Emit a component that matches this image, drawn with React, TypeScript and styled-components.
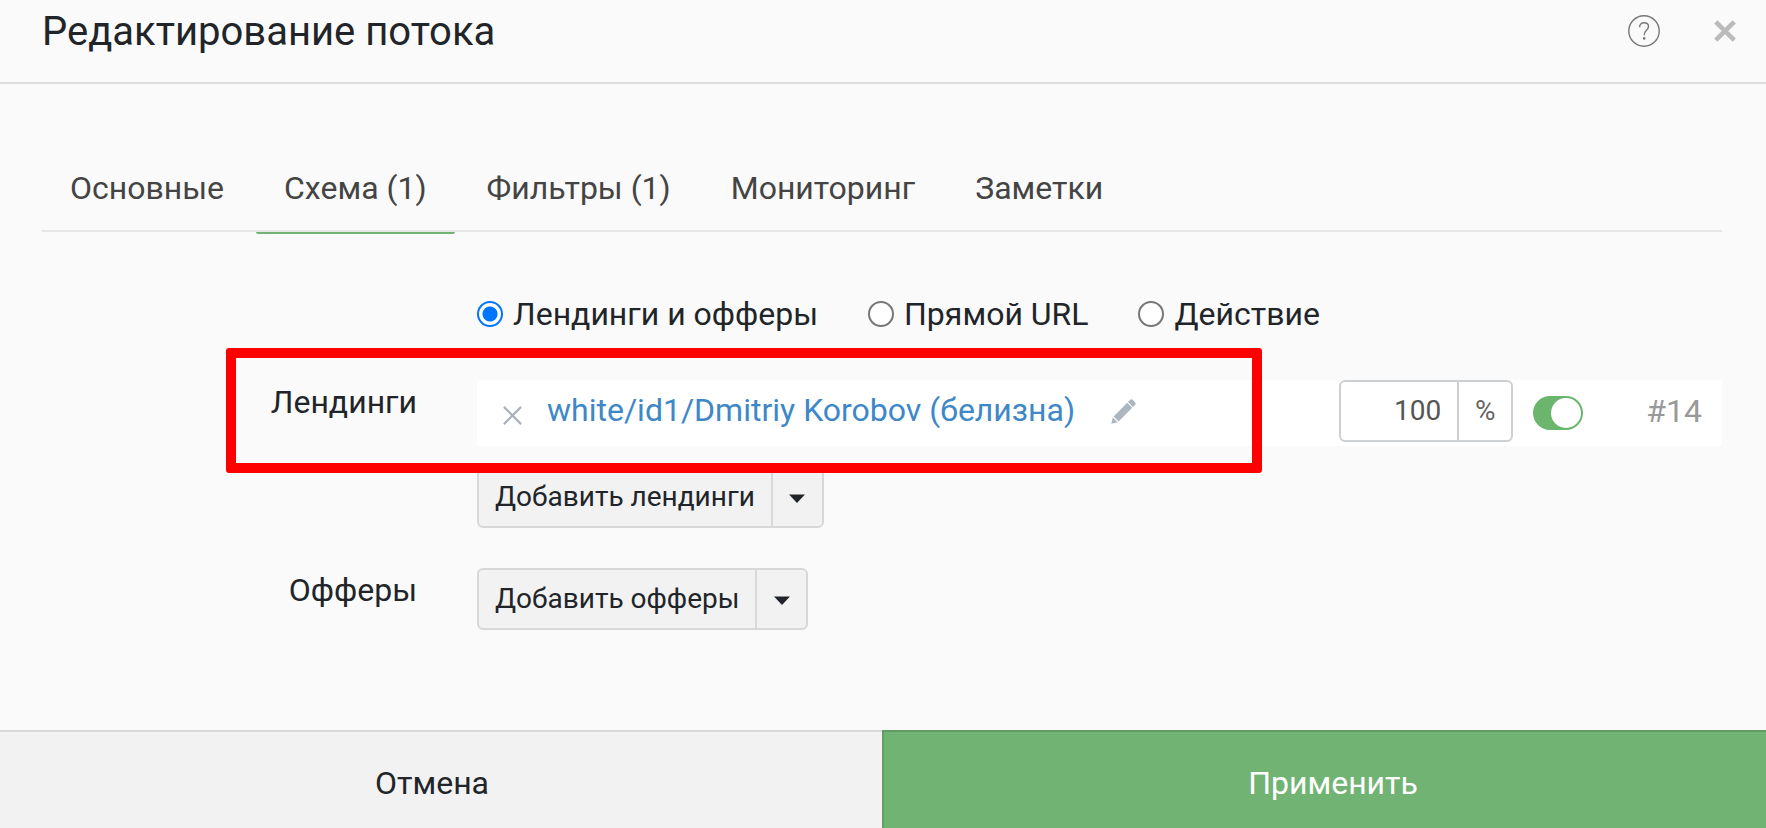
import React, { useState } from "react";
import styled, { createGlobalStyle } from "styled-components";

const GlobalStyle = createGlobalStyle`
  *, *::before, *::after { box-sizing: border-box; }
  body {
    margin: 0;
    background: #fafafa;
    color: #212529;
    font-family: Roboto, "Liberation Sans", sans-serif;
    font-size: 32px;
    line-height: 38px;
  }
  button, input { font: inherit; color: inherit; }
`;

const Dialog = styled.form`
  display: flex;
  flex-direction: column;
  min-height: 100vh;
`;

const Header = styled.header`
  display: flex;
  align-items: flex-start;
  justify-content: space-between;
  padding: 8px 30px 26px 42px;
  border-bottom: 2px solid #dedede;
`;

const Title = styled.h1`
  margin: 0;
  font-size: 40px;
  line-height: 48px;
  font-weight: 400;
`;

const HeaderActions = styled.div`
  display: flex;
  align-items: center;
  gap: 54px;
  height: 45px;
`;

const IconButton = styled.button`
  display: flex;
  flex: none;
  padding: 0;
  border: 0;
  background: none;
  cursor: pointer;
`;

const RemoveButton = styled(IconButton)`
  padding-top: 8px;
`;

const Content = styled.main`
  flex: 1;
  padding: 60px 44px 60px 42px;
`;

const Tabs = styled.div`
  display: flex;
  gap: 4px;
  border-bottom: 2px solid #e6e6e6;
`;

const Tab = styled.button<{ $active: boolean }>`
  margin-bottom: -4px;
  padding: 25px 28px;
  border: 0;
  border-bottom: 2px solid ${(p) => (p.$active ? "#70b373" : "transparent")};
  border-radius: 2px;
  background: none;
  color: #444;
  white-space: nowrap;
  cursor: pointer;
`;

const FormGrid = styled.div`
  display: flex;
  flex-direction: column;
  gap: 40px;
  padding-top: 63px;
`;

const Row = styled.div`
  position: relative;
  display: grid;
  grid-template-columns: minmax(160px, 375px) minmax(0, 1fr);
  column-gap: 60px;
`;

const RadioRow = styled(Row)`
  margin-bottom: 7px;
`;

const RowLabel = styled.div`
  padding-top: 3px;
  text-align: right;
`;

const RowBody = styled.div`
  display: flex;
  flex-direction: column;
  align-items: flex-start;
  gap: 20px;
`;

const RadioGroup = styled.div`
  grid-column: 2;
  display: flex;
  flex-wrap: wrap;
  gap: 50px;
`;

const RadioLabel = styled.label`
  display: flex;
  align-items: center;
  gap: 10px;
  white-space: nowrap;
`;

const Radio = styled.input`
  appearance: none;
  width: 26px;
  height: 26px;
  margin: 0;
  border: 2px solid #767676;
  border-radius: 50%;
  background: #fff;
  &:checked {
    border-color: #0075ff;
    background: radial-gradient(circle, #0075ff 7px, #fff 8px);
  }
`;

const Item = styled.div`
  display: flex;
  align-items: center;
  align-self: stretch;
  padding: 0 20px 4px 26px;
  background: #fff;
`;

const ItemLink = styled.a`
  margin: 0 36px 2px 25px;
  color: #3e88c7;
  text-decoration: none;
  white-space: nowrap;
`;

const Share = styled.div`
  display: flex;
  height: 62px;
  margin: 0 20px 0 auto;
  border: 2px solid #cdd0d2;
  border-radius: 6px;
  font-size: 28px;
`;

const ShareInput = styled.input`
  width: 116px;
  padding: 0 16px;
  border: 0;
  background: none;
  color: #555;
  text-align: right;
`;

const ShareUnit = styled.span`
  display: flex;
  align-items: center;
  justify-content: center;
  width: 54px;
  border-left: 2px solid #cdd0d2;
  color: #666;
`;

const Switch = styled.input`
  appearance: none;
  flex: none;
  width: 50px;
  height: 34px;
  margin: 4px 0 0;
  padding: 2px;
  border-radius: 17px;
  background: #ccc;
  cursor: pointer;
  &::before {
    content: "";
    display: block;
    width: 30px;
    height: 30px;
    border-radius: 50%;
    background: #fff;
  }
  &:checked { background: #6bb56d; }
  &:checked::before { margin-left: 16px; }
`;

const ItemId = styled.span`
  margin-left: 63px;
  color: #999;
`;

const SplitButton = styled.div`
  display: flex;
  height: 62px;
  border: 2px solid #d8d8d8;
  border-radius: 6px;
  background: #f2f2f2;
  font-size: 28px;
`;

const AddButton = styled.button`
  padding: 0 16px;
  border: 0;
  background: none;
  white-space: nowrap;
  cursor: pointer;
`;

const CaretButton = styled.button`
  display: flex;
  align-items: center;
  justify-content: center;
  width: 51px;
  padding: 2px 0 0;
  border: 0;
  border-left: 2px solid #d8d8d8;
  background: none;
  cursor: pointer;
`;

const Highlight = styled.div`
  position: absolute;
  top: -32px;
  left: 184px;
  right: 460px;
  height: 125px;
  border: 10px solid #f00;
  border-radius: 3px;
  pointer-events: none;
`;

const Footer = styled.footer`
  display: grid;
  grid-template-columns: calc(50% - 1px) 1fr;
`;

const FooterButton = styled.button<{ $primary?: boolean }>`
  padding: ${(p) => (p.$primary ? "32px 0 26px 16px" : "32px 18px 26px 0")};
  border: 0 solid ${(p) => (p.$primary ? "#629d65" : "#d8d8d8")};
  border-top-width: 2px;
  border-left-width: ${(p) => (p.$primary ? "2px" : "0")};
  background: ${(p) => (p.$primary ? "#70b373" : "#f2f2f2")};
  color: ${(p) => (p.$primary ? "#fff" : "#212529")};
  cursor: pointer;
`;

const HelpIcon = () => (
  <svg width="32" height="32" viewBox="0 0 32 32" fill="none" stroke="#777" strokeWidth="1.4" aria-hidden="true">
    <circle cx="16" cy="16" r="15.2" />
    <path d="M11.6 12.2C11.4 9.4 13.4 7.8 16.1 7.8C18.7 7.8 20.5 9.4 20.5 11.6C20.5 13.6 19.4 14.5 18 15.8C16.6 17.1 16.2 17.9 16.2 20.2" />
    <circle cx="16.2" cy="23.4" r="1.3" fill="#777" stroke="none" />
  </svg>
);

const CloseIcon = () => (
  <svg width="22" height="22" viewBox="0 0 22 22" stroke="#bbb" strokeWidth="4.6" aria-hidden="true">
    <path d="M1.8 1.8L20.2 20.2M20.2 1.8L1.8 20.2" />
  </svg>
);

const RemoveIcon = () => (
  <svg width="19" height="19" viewBox="0 0 19 19" stroke="#adb2b9" strokeWidth="2.2" aria-hidden="true">
    <path d="M0.9 0.9L18.1 18.1M18.1 0.9L0.9 18.1" />
  </svg>
);

const PencilIcon = () => (
  <svg width="25" height="25" viewBox="0 0 25 25" fill="#adb5bd" aria-hidden="true">
    <path d="M1.7 18.4L6.6 23.3L0.3 24.8Z" />
    <path d="M2.6 17.4L16.2 3.8L21.2 8.8L7.6 22.4Z" />
    <path d="M17 3L19 1Q20.4 -0.3 21.8 1L24 3.2Q25.3 4.6 24 6L22 8Z" />
  </svg>
);

const CaretIcon = () => (
  <svg width="16" height="9" viewBox="0 0 16 9" fill="#212529" aria-hidden="true">
    <path d="M0 0.5H16L8 9Z" />
  </svg>
);

const tabs = ["Основные", "Схема (1)", "Фильтры (1)", "Мониторинг", "Заметки"];
const schemas = ["Лендинги и офферы", "Прямой URL", "Действие"];

const AddControl = ({ text }: { text: string }) => (
  <SplitButton>
    <AddButton type="button">{text}</AddButton>
    <CaretButton type="button" aria-label={`${text}: ещё`}>
      <CaretIcon />
    </CaretButton>
  </SplitButton>
);

export default function App() {
  const [tab, setTab] = useState(1);
  const [schema, setSchema] = useState(0);

  return (
    <>
      <GlobalStyle />
      <Dialog onSubmit={(e) => e.preventDefault()}>
        <Header>
          <Title>Редактирование потока</Title>
          <HeaderActions>
            <IconButton type="button" aria-label="Помощь">
              <HelpIcon />
            </IconButton>
            <IconButton type="button" aria-label="Закрыть">
              <CloseIcon />
            </IconButton>
          </HeaderActions>
        </Header>

        <Content>
          <Tabs role="tablist">
            {tabs.map((name, i) => (
              <Tab key={name} type="button" role="tab" aria-selected={i === tab} $active={i === tab} onClick={() => setTab(i)}>
                {name}
              </Tab>
            ))}
          </Tabs>

          <FormGrid>
            <RadioRow>
              <RadioGroup role="radiogroup" aria-label="Схема">
                {schemas.map((name, i) => (
                  <RadioLabel key={name}>
                    <Radio type="radio" name="schema" checked={i === schema} onChange={() => setSchema(i)} />
                    {name}
                  </RadioLabel>
                ))}
              </RadioGroup>
            </RadioRow>

            <Row>
              <RowLabel>Лендинги</RowLabel>
              <RowBody>
                <Item>
                  <RemoveButton type="button" aria-label="Удалить">
                    <RemoveIcon />
                  </RemoveButton>
                  <ItemLink href="#landing">white/id1/Dmitriy Korobov (белизна)</ItemLink>
                  <IconButton type="button" aria-label="Редактировать">
                    <PencilIcon />
                  </IconButton>
                  <Share>
                    <ShareInput type="text" inputMode="numeric" defaultValue="100" aria-label="Доля, %" />
                    <ShareUnit>%</ShareUnit>
                  </Share>
                  <Switch type="checkbox" role="switch" defaultChecked aria-label="Включён" />
                  <ItemId>#14</ItemId>
                </Item>
                <AddControl text="Добавить лендинги" />
              </RowBody>
              <Highlight />
            </Row>

            <Row>
              <RowLabel>Офферы</RowLabel>
              <RowBody>
                <AddControl text="Добавить офферы" />
              </RowBody>
            </Row>
          </FormGrid>
        </Content>

        <Footer>
          <FooterButton type="button">Отмена</FooterButton>
          <FooterButton type="submit" $primary>
            Применить
          </FooterButton>
        </Footer>
      </Dialog>
    </>
  );
}
